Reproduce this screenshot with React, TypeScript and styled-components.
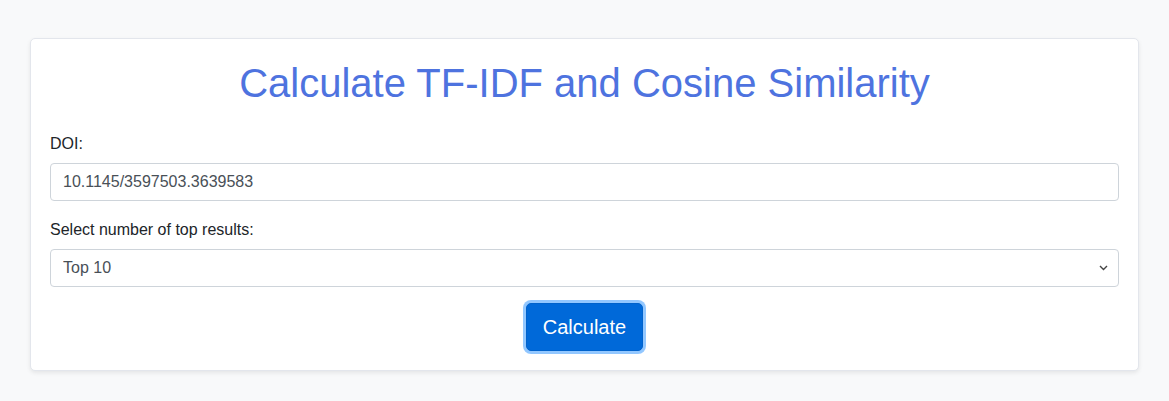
import React from "react";
import styled, { createGlobalStyle } from "styled-components";

const GlobalStyle = createGlobalStyle`
  html, body {
    margin: 0;
    padding: 0;
    background: #f8f9fa;
    font-family: "Liberation Sans", Arial, sans-serif;
    color: #212529;
  }
  * { box-sizing: border-box; }
`;

const Page = styled.div`
  padding: 38px 30px 30px;
`;

const Card = styled.div`
  background: #fff;
  border: 1px solid #e3e6ec;
  border-radius: 5px;
  box-shadow: 0 2px 4px rgba(0, 0, 0, 0.08);
  padding: 20px 19px 19px;
`;

const Title = styled.h1`
  margin: 0 0 25px;
  font-size: 40px;
  line-height: 48px;
  font-weight: 400;
  text-align: center;
  color: #4e73df;
`;

const Group = styled.div<{ $gap?: number }>`
  margin-bottom: ${(p) => p.$gap ?? 17}px;
`;

const Label = styled.label`
  display: block;
  font-size: 16px;
  line-height: 24px;
  margin-bottom: 7px;
  color: #212529;
`;

const Input = styled.input`
  display: block;
  width: 100%;
  height: 38px;
  padding: 6px 12px;
  font-family: inherit;
  font-size: 16px;
  line-height: 24px;
  color: #495057;
  background: #fff;
  border: 1px solid #ced4da;
  border-radius: 4px;
  outline: none;
`;

const SelectWrap = styled.div`
  position: relative;
`;

const Select = styled.select`
  display: block;
  width: 100%;
  height: 38px;
  padding: 6px 12px;
  font-family: inherit;
  font-size: 16px;
  line-height: 24px;
  color: #495057;
  background: #fff;
  border: 1px solid #ced4da;
  border-radius: 4px;
  appearance: none;
  -webkit-appearance: none;
  outline: none;
`;

const Chevron = styled.svg`
  position: absolute;
  right: 11px;
  top: 16px;
  width: 9px;
  height: 6px;
  pointer-events: none;
`;

const Actions = styled.div`
  display: flex;
  justify-content: center;
`;

const Button = styled.button`
  font-family: inherit;
  font-size: 20px;
  line-height: 30px;
  padding: 8px 16px;
  color: #fff;
  background: #0069d9;
  border: 1px solid #0062cc;
  border-radius: 5px;
  box-shadow: 0 0 0 3px rgba(38, 143, 255, 0.5);
  cursor: pointer;
`;

export default function App() {
  return (
    <>
      <GlobalStyle />
      <Page>
        <Card>
          <Title>Calculate TF-IDF and Cosine Similarity</Title>
          <Group>
            <Label htmlFor="doi">DOI:</Label>
            <Input id="doi" type="text" defaultValue="10.1145/3597503.3639583" />
          </Group>
          <Group $gap={16}>
            <Label htmlFor="top">Select number of top results:</Label>
            <SelectWrap>
              <Select id="top" defaultValue="10">
                <option value="5">Top 5</option>
                <option value="10">Top 10</option>
                <option value="20">Top 20</option>
              </Select>
              <Chevron viewBox="0 0 9 6">
                <path d="M1 1l3.5 3.5L8 1" fill="none" stroke="#444" strokeWidth="1.4" />
              </Chevron>
            </SelectWrap>
          </Group>
          <Actions>
            <Button type="button">Calculate</Button>
          </Actions>
        </Card>
      </Page>
    </>
  );
}
